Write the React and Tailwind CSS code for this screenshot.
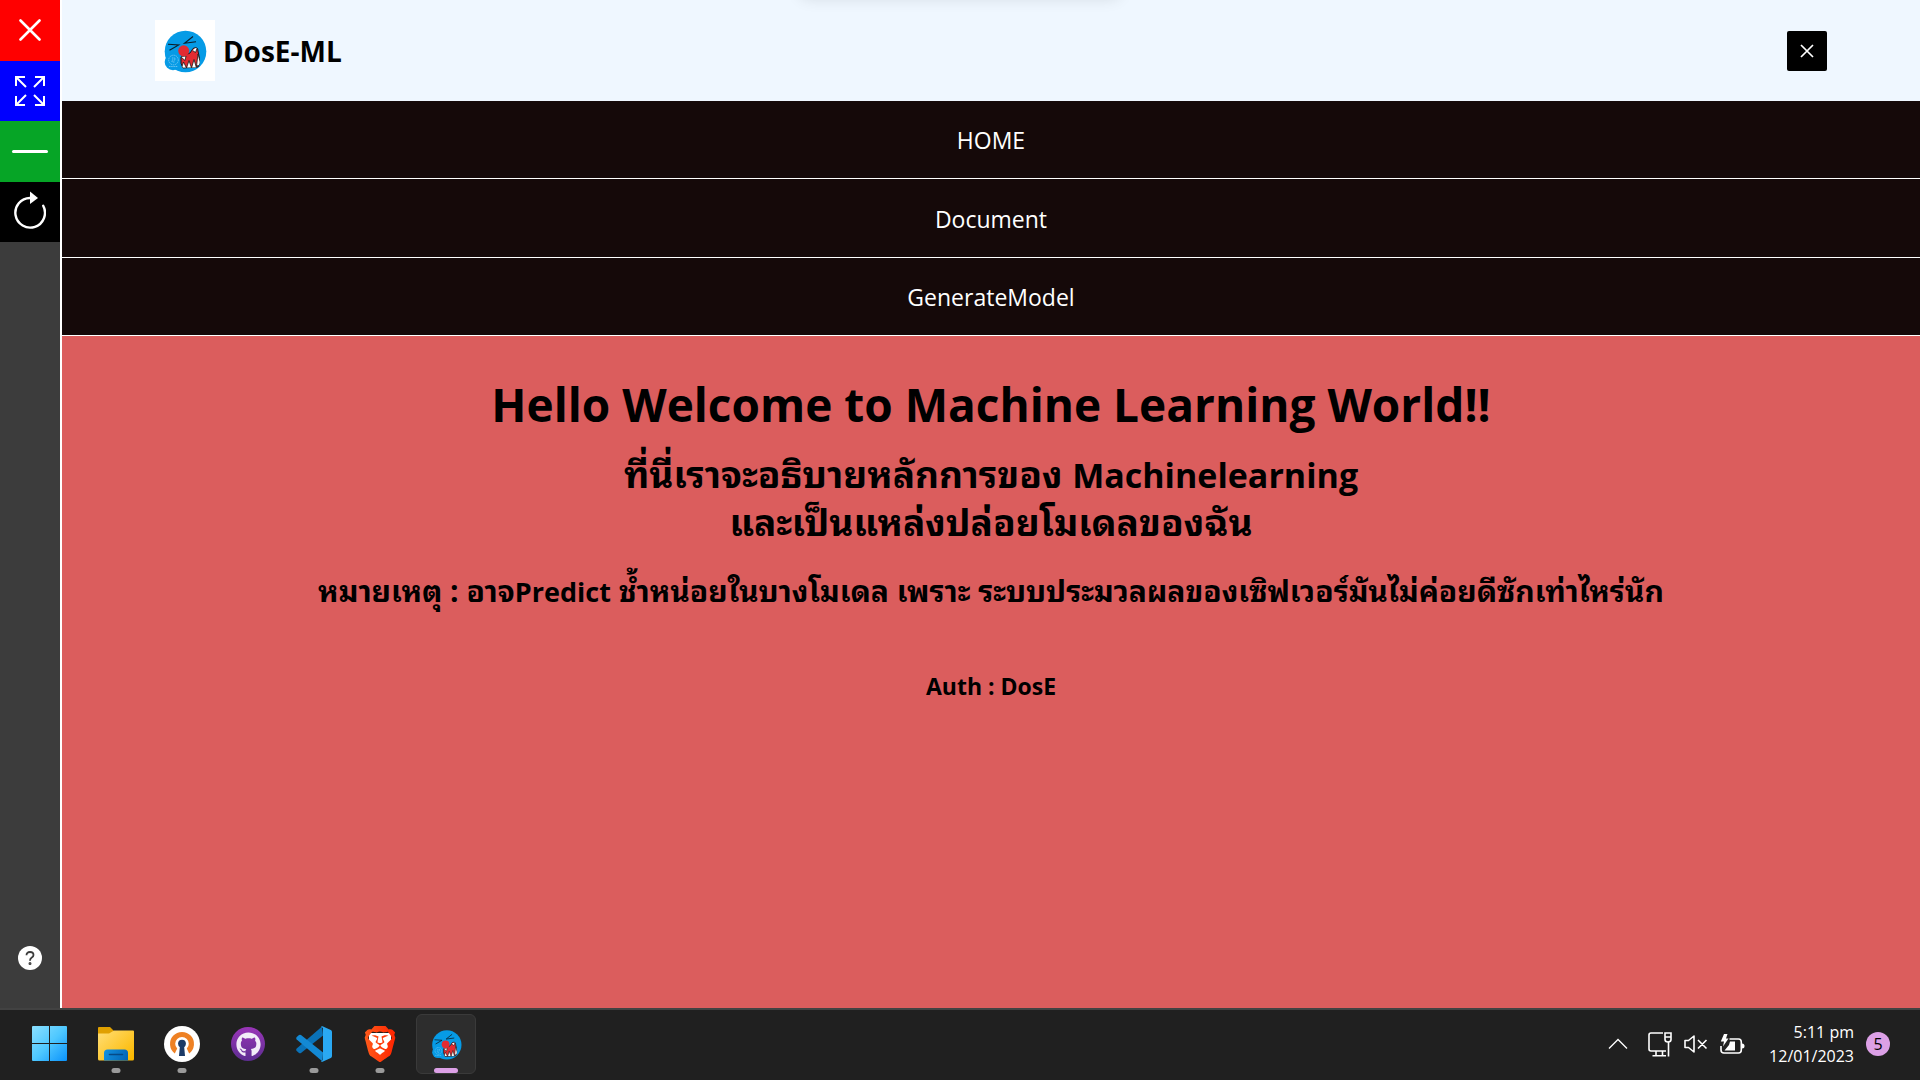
import { FaGithub } from "react-icons/fa6";
import { SiBrave } from "react-icons/si";

function MascotIcon({ size, id }) {
  return (
    <svg width={size} height={size} viewBox="0 0 44 44" aria-hidden="true">
      <defs>
        <clipPath id={id}>
          <path d="M18 28 L27 24 L31 20 Q33 18 35 20 L36 24 Q39 36 33 38.500 L20 39 Q17 34 18 28 Z" />
        </clipPath>
      </defs>
      <circle cx="22.500" cy="22.500" r="20.800" fill="#069be6" />
      <circle cx="10" cy="33" r="8.300" fill="#069be6" />
      <path d="M5 15.300 L15.700 16 L6.500 21.300 M30 7.500 L21.500 14.300 L33 12.800" fill="none" stroke="#0b1d2a" strokeWidth="1.100" />
      <path d="M18 28 L27 24 L30 19.500 Q35 17 35 22 Q38 34 35 38 L20 39 Q17 35 18 28 Z" fill="#e22b31" stroke="#1b1b1b" strokeWidth="1" />
      <g clipPath={`url(#${id})`} fill="#fff" stroke="#1b1b1b" strokeWidth="0.800">
        <path d="M17.500 27.500 L23 27 L22 31.500 Z M27.500 20 L34.500 18 L32.500 23.500 Z" />
        <path d="M18.500 39 L20.500 33 L23.500 39 Z M23.500 39 L26 31.500 L28.500 39 Z M28.500 39 L31 30.500 L33.500 39 Z M33.500 37 L35 25 L38 36 Z" />
      </g>
      <circle cx="20.700" cy="21.800" r="5.500" fill="#e22b31" />
      <g fill="none" stroke="#8fd2f7" strokeWidth="0.700" strokeDasharray="1.500 0.700">
        <circle cx="10.500" cy="31" r="4.800" />
        <path d="M9 29 h3 v2 h-3 v2 h3 M6 37.500 h9" />
      </g>
    </svg>
  );
}

function WindowsIcon() {
  return (
    <svg width="36" height="36" viewBox="0 0 36 36" aria-hidden="true">
      <defs>
        <linearGradient id="win" x1="0" y1="0" x2="35" y2="35" gradientUnits="userSpaceOnUse">
          <stop stopColor="#8be0ff" />
          <stop offset="0.500" stopColor="#4fc8ff" />
          <stop offset="1" stopColor="#0a92fb" />
        </linearGradient>
      </defs>
      <path fill="url(#win)" d="M1 0H17V17H0V1Q0 0 1 0ZM18 0H34Q35 0 35 1V17H18ZM0 18H17V35H1Q0 35 0 34ZM18 18H35V34Q35 35 34 35H18Z" />
    </svg>
  );
}

function FolderIcon() {
  return (
    <svg width="36" height="34" viewBox="0 0 36 34" aria-hidden="true">
      <defs>
        <linearGradient id="folder" x1="4" y1="3" x2="32" y2="33" gradientUnits="userSpaceOnUse">
          <stop stopColor="#ffdc70" />
          <stop offset="1" stopColor="#fcb900" />
        </linearGradient>
        <linearGradient id="tray" x1="6" y1="23" x2="30" y2="33" gradientUnits="userSpaceOnUse">
          <stop stopColor="#1492e0" />
          <stop offset="1" stopColor="#0263b4" />
        </linearGradient>
      </defs>
      <path d="M0 1Q0 0 1 0H12L16 4V10H0Z" fill="#e0a000" />
      <path d="M0 6.500H11L16 3.500H35Q36 3.500 36 4.500V32Q36 33.500 34.500 33.500H1.500Q0 33.500 0 32Z" fill="url(#folder)" />
      <path d="M6 33.500V26Q6 22.500 9.500 22.500H26.500Q30 22.500 30 26V33.500Z" fill="url(#tray)" />
      <path d="M11.500 27.500H24.500" stroke="#064a86" strokeWidth="1.600" strokeLinecap="round" />
    </svg>
  );
}

function VpnIcon() {
  return (
    <svg width="36" height="36" viewBox="0 0 36 36" aria-hidden="true">
      <circle cx="18" cy="18" r="18" fill="#fff" />
      <path d="M10.800 27.500A12 12 0 1 1 25.200 27.500L22.800 22.500A6.800 6.800 0 1 0 13.200 22.500Z" fill="#ee8124" />
      <circle cx="18" cy="17.600" r="3.900" fill="#1b3a66" />
      <path d="M16 19H20L21 30H15Z" fill="#1b3a66" />
    </svg>
  );
}

function GithubDesktopIcon() {
  return (
    <span className="flex size-[34px] items-center justify-center rounded-full bg-linear-to-b from-[#9a35b8] to-[#5d2d91]">
      <FaGithub className="size-[25px] text-[#f2edf8]" aria-hidden="true" />
    </span>
  );
}

function CodeIcon() {
  return (
    <svg width="36" height="36" viewBox="0 0 36 36" aria-hidden="true">
      <path d="M26 0.500L27 9.500L5 27Q4 27.500 3 27L0.700 25Q-0.300 23.700 0.700 22.500Z" fill="#0a72b8" />
      <path d="M26.500 35.500L27 26.500L5 9Q4 8.500 3 9L0.700 11Q-0.300 12.300 0.700 13.500Z" fill="#1389d4" />
      <path d="M26.500 0.300L34.800 4Q36 4.700 36 6V30Q36 31.300 34.800 32L26.500 35.700Q25.500 35.800 25 35.200L27 34V2L25 0.800Q25.700 0 26.500 0.300Z" fill="#2aa9f3" />
    </svg>
  );
}

function BraveIcon() {
  return (
    <span className="relative flex size-[36px] items-center justify-center">
      <svg width="36" height="36" viewBox="0 0 36 36" className="absolute" aria-hidden="true">
        <defs>
          <linearGradient id="brave" x1="0" y1="0" x2="1" y2="0">
            <stop stopColor="#ff5a1a" />
            <stop offset="1" stopColor="#ff2400" />
          </linearGradient>
        </defs>
        <path d="M7 7H29V23L18 32L7 23Z" fill="#fff" />
      </svg>
      <SiBrave className="relative size-[36px]" style={{ fill: "url(#brave)" }} aria-hidden="true" />
    </span>
  );
}

function SideButton({ label, className, children }) {
  return (
    <button type="button" aria-label={label} className={`flex items-center justify-center ${className}`}>
      {children}
    </button>
  );
}

function Sidebar() {
  return (
    <aside className="flex w-[62px] shrink-0 flex-col justify-between border-r-2 border-white bg-[#3c3c3c]">
      <div className="grid h-[242px] grid-rows-4">
        <SideButton label="Close" className="bg-[#ff0000]">
          <svg width="22" height="22" viewBox="0 0 22 22" stroke="#fff" strokeWidth="2.600" strokeLinecap="round" aria-hidden="true">
            <path d="M1.500 1.500L20.500 20.500M20.500 1.500L1.500 20.500" />
          </svg>
        </SideButton>
        <SideButton label="Full screen" className="bg-[#0000ff]">
          <svg width="30" height="30" viewBox="0 0 30 30" fill="none" stroke="#fff" strokeWidth="2" aria-hidden="true">
            <path d="M10 1H1V10M1 1L11 11M20 1H29V10M29 1L19 11M10 29H1V20M1 29L11 19M20 29H29V20M29 29L19 19" />
          </svg>
        </SideButton>
        <SideButton label="Minimize" className="bg-[#06a526]">
          <span className="h-[3px] w-[36px] rounded-full bg-white" />
        </SideButton>
        <SideButton label="Reload" className="bg-black pb-1">
          <svg width="32" height="38" viewBox="0 0 32 38" aria-hidden="true">
            <path d="M16 7A14.800 14.800 0 1 0 29.200 14.800" fill="none" stroke="#fff" strokeWidth="2.400" strokeLinecap="round" />
            <path d="M16 0.500L24 7L16 13Z" fill="#fff" />
          </svg>
        </SideButton>
      </div>
      <button type="button" aria-label="Help" className="mb-[38px] flex size-6 items-center justify-center self-center rounded-full bg-white">
        <svg width="10" height="14" viewBox="0 0 10 14" fill="none" stroke="#3c3c3c" strokeWidth="1.800" aria-hidden="true">
          <path d="M1.500 4.200Q1.500 1 5 1Q8.500 1 8.500 4Q8.500 5.500 6.500 6.800Q5 7.800 5 9.800" />
          <circle cx="5" cy="12.500" r="0.600" />
        </svg>
      </button>
    </aside>
  );
}

const links = ["HOME", "Document", "GenerateModel"];

function Page() {
  return (
    <div className="flex min-w-0 flex-1 flex-col bg-[#db5d5d]">
      <header className="flex h-[101px] items-center justify-between bg-[#eff7ff] px-[5%]">
        <a href="#home" className="flex items-center gap-2">
          <span className="flex h-[61px] w-[60px] items-center justify-center bg-white">
            <MascotIcon size={44} id="mouth-lg" />
          </span>
          <span className="text-[28px] font-bold text-black">DosE-ML</span>
        </a>
        <button type="button" aria-label="Close menu" className="flex size-10 items-center justify-center rounded-xs bg-black">
          <svg width="14" height="14" viewBox="0 0 14 14" stroke="#fff" strokeWidth="1.700" aria-hidden="true">
            <path d="M1 1L13 13M13 1L1 13" />
          </svg>
        </button>
      </header>
      <nav className="grid h-[235px] grid-rows-3 bg-[#150909]">
        {links.map((name) => (
          <a key={name} href={`#${name}`} className="flex items-center justify-center border-b border-white pt-0.5 text-[23px] text-white">
            {name}
          </a>
        ))}
      </nav>
      <main className="flex flex-col items-center px-4 pt-8 text-center font-bold text-black">
        <h1 className="text-[46px] leading-[72px]">Hello Welcome to Machine Learning World!!</h1>
        <h2 className="mt-2.5 text-[37px] leading-[48px]">
          ที่นี่เราจะอธิบายหลักการของ <span className="text-[34px] leading-none">Machinelearning</span>
          <br />
          และเป็นแหล่งปล่อยโมเดลของฉัน
        </h2>
        <h3 className="mt-6 text-[30px] leading-[42px]">
          หมายเหตุ : อาจ<span className="text-[27px] leading-none">Predict</span> ช้ำหน่อยในบางโมเดล เพราะ ระบบประมวลผลของเซิฟเวอร์มันไม่ค่อยดีซักเท่าไหร่นัก
        </h3>
        <h4 className="mt-14 text-[23px] leading-9">Auth : DosE</h4>
      </main>
    </div>
  );
}

const apps = [
  { name: "Start", icon: <WindowsIcon /> },
  { name: "File Explorer", icon: <FolderIcon />, open: true },
  { name: "OpenVPN", icon: <VpnIcon />, open: true },
  { name: "GitHub Desktop", icon: <GithubDesktopIcon /> },
  { name: "Visual Studio Code", icon: <CodeIcon />, open: true },
  { name: "Brave", icon: <BraveIcon />, open: true },
  { name: "DosE", icon: <MascotIcon size={31} id="mouth-sm" />, active: true },
];

function Taskbar() {
  return (
    <footer className="flex h-[72px] shrink-0 items-center justify-between border-t-2 border-[#424242] bg-[#202020] pr-[30px] pb-0.5 pl-5 text-white">
      <div className="flex gap-1.5">
        {apps.map((app) => (
          <button
            key={app.name}
            type="button"
            aria-label={app.name}
            className={
              app.active
                ? "relative flex size-[60px] items-center justify-center rounded-md border border-[#3a3a3a] bg-[#2d2d2d]"
                : "relative flex size-[60px] items-center justify-center"
            }
          >
            {app.icon}
            {app.open && <span className="absolute bottom-px left-1/2 h-[5px] w-[9px] -translate-x-1/2 rounded-full bg-[#9a9a9a]" />}
            {app.active && <span className="absolute bottom-0 left-1/2 h-[5px] w-6 -translate-x-1/2 rounded-full bg-[#dca0e6]" />}
          </button>
        ))}
      </div>
      <div className="flex items-center gap-3">
        <button type="button" aria-label="Show hidden icons" className="mr-2">
          <svg width="20" height="12" viewBox="0 0 20 12" fill="none" stroke="#fff" strokeWidth="1.300" aria-hidden="true">
            <path d="M1 10.500L10 1.500L19 10.500" />
          </svg>
        </button>
        <button type="button" aria-label="Network, volume and battery" className="mr-3 flex items-center gap-3">
          <svg width="24" height="25" viewBox="0 0 24 25" fill="none" stroke="#fff" strokeWidth="1.600" aria-hidden="true">
            <path d="M15 1H3Q1 1 1 3V17Q1 19 3 19H18M8 19V23.500M14.500 19V23.500M4.500 23.800H18M20.500 10V24.500" />
            <path d="M17 1H23V7.500Q23 10 20 10Q17 10 17 7.500ZM17 5H23" />
          </svg>
          <svg width="24" height="18" viewBox="0 0 24 18" fill="none" stroke="#fff" strokeWidth="1.600" strokeLinejoin="round" aria-hidden="true">
            <path d="M1 5.500H4.500L10 1V17L4.500 12.500H1ZM14 5L22.500 13.500M22.500 5L14 13.500" />
          </svg>
          <svg width="25" height="21" viewBox="0 0 25 21" fill="none" stroke="#fff" strokeWidth="1.600" aria-hidden="true">
            <path d="M9.500 5H18.500Q21.300 5 21.300 8V16Q21.300 19 18.500 19H4Q1 19 1 16V12" />
            <path d="M10 7.500H15V16.500H4.500L9 11Z" fill="#fff" stroke="none" />
            <path d="M22 9.500Q24.500 9.500 24.500 12Q24.500 14.500 22 14.500Z" fill="#fff" stroke="none" />
            <path d="M4 0H7.500L6 4.500H8.500L3 12.500L4 7.500H0.800Z" fill="#fff" stroke="none" />
          </svg>
        </button>
        <time dateTime="2023-01-12T17:11" className="text-right text-base">
          5:11 pm
          <br />
          12/01/2023
        </time>
        <button type="button" aria-label="5 notifications" className="flex size-6 items-center justify-center rounded-full bg-[#dca0e6] text-base text-black">
          5
        </button>
      </div>
    </footer>
  );
}

export default function App() {
  return (
    <div className="relative flex min-h-screen flex-col overflow-hidden font-['Open_Sans','Noto_Sans_Thai_Looped','Loma','Waree','Noto_Sans',sans-serif]">
      <div className="flex flex-1">
        <Sidebar />
        <Page />
      </div>
      <Taskbar />
      <div className="pointer-events-none absolute -top-11 left-1/2 h-10 w-80 -translate-x-1/2 rounded-lg shadow-[0_2px_16px_rgba(0,0,0,0.12)]" />
    </div>
  );
}
